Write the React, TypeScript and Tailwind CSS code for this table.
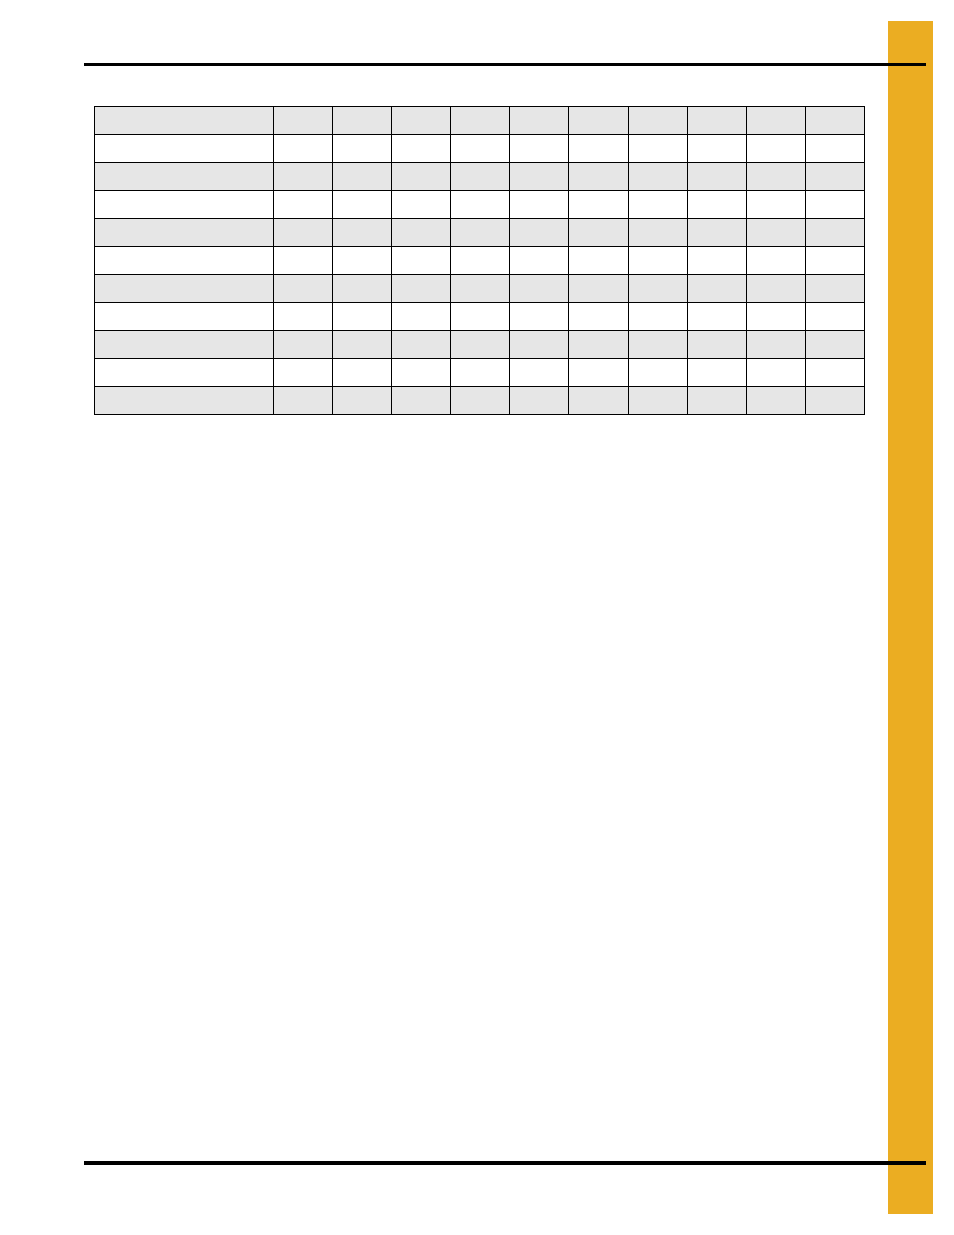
import React from "react";

const rows = Array.from({ length: 11 }, (_, i) => i);
const cols = Array.from({ length: 11 }, (_, i) => i);

export default function App() {
  return (
    <div className="relative w-[954px] h-[1235px] bg-white overflow-hidden" style={{ fontFamily: '"Liberation Sans", Arial, sans-serif' }}>
      <div className="absolute left-[888px] top-[21px] w-[45px] h-[1193px] bg-[#ebad22]" />
      <div className="relative flex flex-col pt-[63px]">
        <div className="ml-[84px] w-[842px] h-[3px] bg-black" />
        <div className="ml-[94px] mt-[40px] w-fit border-l border-t border-black">
          {rows.map((r) => (
            <div key={r} className={`grid grid-cols-[179px_repeat(10,59.1px)] h-[28px] ${r % 2 === 0 ? "bg-[#e6e6e6]" : "bg-white"}`}>
              {cols.map((c) => (
                <div key={c} className="border-r border-b border-black" />
              ))}
            </div>
          ))}
        </div>
        <div className="ml-[84px] mt-[746px] w-[842px] h-[4px] bg-black" />
      </div>
    </div>
  );
}
